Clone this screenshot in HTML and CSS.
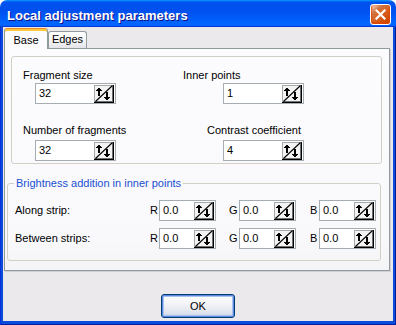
FILE: index.html
```html
<!DOCTYPE html>
<html>
<head>
<meta charset="utf-8">
<title>Local adjustment parameters</title>
<link rel="stylesheet" href="styles.css">
</head>
<body>
<div class="window">
  <div class="titlebar">
    <span class="title">Local adjustment parameters</span>
    <span class="close"><svg width="11" height="11" viewBox="0 0 11 11"><path d="M1.5 1.5 L9.5 9.5 M9.5 1.5 L1.5 9.5" stroke="#fff" stroke-width="2.2" stroke-linecap="square" fill="none"/></svg></span>
  </div>
  <div class="frame">
    <div class="client">
      <div class="tabs">
        <div class="tab active">Base</div>
        <div class="tab">Edges</div>
      </div>
      <div class="panel">
        <div class="box">
          <div class="field">
            <div class="lbl">Fragment size</div>
            <div class="input wide ind-l"><span class="val">32</span><svg class="spin" width="20" height="18" viewBox="0 0 20 18" shape-rendering="crispEdges"><rect width="20" height="18" fill="#f3f3f3"/><rect width="20" height="1" fill="#a8a8a8"/><rect width="1" height="18" fill="#a8a8a8"/><rect x="19" width="1" height="18" fill="#000"/><rect y="17" width="20" height="1" fill="#000"/><rect x="18" y="1" width="1" height="16" fill="#707070"/><rect x="1" y="16" width="18" height="1" fill="#707070"/><path d="M1.5 16.5 L18.5 0.5" stroke="#000" stroke-width="1.1" shape-rendering="auto"/><path d="M4 3H6V4H7V5H8V6H6V11H4V6H2V5H3V4H4Z" fill="#000"/><path d="M12 7H14V12H16V13H15V14H14V15H12V14H11V13H10V12H12Z" fill="#000"/></svg></div>
          </div>
          <div class="field">
            <div class="lbl">Inner points</div>
            <div class="input wide ind-r"><span class="val">1</span><svg class="spin" width="20" height="18" viewBox="0 0 20 18" shape-rendering="crispEdges"><rect width="20" height="18" fill="#f3f3f3"/><rect width="20" height="1" fill="#a8a8a8"/><rect width="1" height="18" fill="#a8a8a8"/><rect x="19" width="1" height="18" fill="#000"/><rect y="17" width="20" height="1" fill="#000"/><rect x="18" y="1" width="1" height="16" fill="#707070"/><rect x="1" y="16" width="18" height="1" fill="#707070"/><path d="M1.5 16.5 L18.5 0.5" stroke="#000" stroke-width="1.1" shape-rendering="auto"/><path d="M4 3H6V4H7V5H8V6H6V11H4V6H2V5H3V4H4Z" fill="#000"/><path d="M12 7H14V12H16V13H15V14H14V15H12V14H11V13H10V12H12Z" fill="#000"/></svg></div>
          </div>
          <div class="field row2">
            <div class="lbl">Number of fragments</div>
            <div class="input wide ind-l gap3"><span class="val">32</span><svg class="spin" width="20" height="18" viewBox="0 0 20 18" shape-rendering="crispEdges"><rect width="20" height="18" fill="#f3f3f3"/><rect width="20" height="1" fill="#a8a8a8"/><rect width="1" height="18" fill="#a8a8a8"/><rect x="19" width="1" height="18" fill="#000"/><rect y="17" width="20" height="1" fill="#000"/><rect x="18" y="1" width="1" height="16" fill="#707070"/><rect x="1" y="16" width="18" height="1" fill="#707070"/><path d="M1.5 16.5 L18.5 0.5" stroke="#000" stroke-width="1.1" shape-rendering="auto"/><path d="M4 3H6V4H7V5H8V6H6V11H4V6H2V5H3V4H4Z" fill="#000"/><path d="M12 7H14V12H16V13H15V14H14V15H12V14H11V13H10V12H12Z" fill="#000"/></svg></div>
          </div>
          <div class="field row2">
            <div class="lbl ind-c">Contrast coefficient</div>
            <div class="input wide ind-r gap3"><span class="val">4</span><svg class="spin" width="20" height="18" viewBox="0 0 20 18" shape-rendering="crispEdges"><rect width="20" height="18" fill="#f3f3f3"/><rect width="20" height="1" fill="#a8a8a8"/><rect width="1" height="18" fill="#a8a8a8"/><rect x="19" width="1" height="18" fill="#000"/><rect y="17" width="20" height="1" fill="#000"/><rect x="18" y="1" width="1" height="16" fill="#707070"/><rect x="1" y="16" width="18" height="1" fill="#707070"/><path d="M1.5 16.5 L18.5 0.5" stroke="#000" stroke-width="1.1" shape-rendering="auto"/><path d="M4 3H6V4H7V5H8V6H6V11H4V6H2V5H3V4H4Z" fill="#000"/><path d="M12 7H14V12H16V13H15V14H14V15H12V14H11V13H10V12H12Z" fill="#000"/></svg></div>
          </div>
        </div>
        <fieldset class="group">
          <legend>Brightness addition in inner points</legend>
          <div class="crow first">
            <div class="clbl">Along strip:</div>
            <div class="ch"><span class="cl">R</span><div class="input small"><span class="val">0.0</span><svg class="spin" width="20" height="18" viewBox="0 0 20 18" shape-rendering="crispEdges"><rect width="20" height="18" fill="#f3f3f3"/><rect width="20" height="1" fill="#a8a8a8"/><rect width="1" height="18" fill="#a8a8a8"/><rect x="19" width="1" height="18" fill="#000"/><rect y="17" width="20" height="1" fill="#000"/><rect x="18" y="1" width="1" height="16" fill="#707070"/><rect x="1" y="16" width="18" height="1" fill="#707070"/><path d="M1.5 16.5 L18.5 0.5" stroke="#000" stroke-width="1.1" shape-rendering="auto"/><path d="M4 3H6V4H7V5H8V6H6V11H4V6H2V5H3V4H4Z" fill="#000"/><path d="M12 7H14V12H16V13H15V14H14V15H12V14H11V13H10V12H12Z" fill="#000"/></svg></div></div>
            <div class="ch g"><span class="cl wg">G</span><div class="input small"><span class="val">0.0</span><svg class="spin" width="20" height="18" viewBox="0 0 20 18" shape-rendering="crispEdges"><rect width="20" height="18" fill="#f3f3f3"/><rect width="20" height="1" fill="#a8a8a8"/><rect width="1" height="18" fill="#a8a8a8"/><rect x="19" width="1" height="18" fill="#000"/><rect y="17" width="20" height="1" fill="#000"/><rect x="18" y="1" width="1" height="16" fill="#707070"/><rect x="1" y="16" width="18" height="1" fill="#707070"/><path d="M1.5 16.5 L18.5 0.5" stroke="#000" stroke-width="1.1" shape-rendering="auto"/><path d="M4 3H6V4H7V5H8V6H6V11H4V6H2V5H3V4H4Z" fill="#000"/><path d="M12 7H14V12H16V13H15V14H14V15H12V14H11V13H10V12H12Z" fill="#000"/></svg></div></div>
            <div class="ch b"><span class="cl">B</span><div class="input small"><span class="val">0.0</span><svg class="spin" width="20" height="18" viewBox="0 0 20 18" shape-rendering="crispEdges"><rect width="20" height="18" fill="#f3f3f3"/><rect width="20" height="1" fill="#a8a8a8"/><rect width="1" height="18" fill="#a8a8a8"/><rect x="19" width="1" height="18" fill="#000"/><rect y="17" width="20" height="1" fill="#000"/><rect x="18" y="1" width="1" height="16" fill="#707070"/><rect x="1" y="16" width="18" height="1" fill="#707070"/><path d="M1.5 16.5 L18.5 0.5" stroke="#000" stroke-width="1.1" shape-rendering="auto"/><path d="M4 3H6V4H7V5H8V6H6V11H4V6H2V5H3V4H4Z" fill="#000"/><path d="M12 7H14V12H16V13H15V14H14V15H12V14H11V13H10V12H12Z" fill="#000"/></svg></div></div>
          </div>
          <div class="crow">
            <div class="clbl">Between strips:</div>
            <div class="ch"><span class="cl">R</span><div class="input small"><span class="val">0.0</span><svg class="spin" width="20" height="18" viewBox="0 0 20 18" shape-rendering="crispEdges"><rect width="20" height="18" fill="#f3f3f3"/><rect width="20" height="1" fill="#a8a8a8"/><rect width="1" height="18" fill="#a8a8a8"/><rect x="19" width="1" height="18" fill="#000"/><rect y="17" width="20" height="1" fill="#000"/><rect x="18" y="1" width="1" height="16" fill="#707070"/><rect x="1" y="16" width="18" height="1" fill="#707070"/><path d="M1.5 16.5 L18.5 0.5" stroke="#000" stroke-width="1.1" shape-rendering="auto"/><path d="M4 3H6V4H7V5H8V6H6V11H4V6H2V5H3V4H4Z" fill="#000"/><path d="M12 7H14V12H16V13H15V14H14V15H12V14H11V13H10V12H12Z" fill="#000"/></svg></div></div>
            <div class="ch g"><span class="cl wg">G</span><div class="input small"><span class="val">0.0</span><svg class="spin" width="20" height="18" viewBox="0 0 20 18" shape-rendering="crispEdges"><rect width="20" height="18" fill="#f3f3f3"/><rect width="20" height="1" fill="#a8a8a8"/><rect width="1" height="18" fill="#a8a8a8"/><rect x="19" width="1" height="18" fill="#000"/><rect y="17" width="20" height="1" fill="#000"/><rect x="18" y="1" width="1" height="16" fill="#707070"/><rect x="1" y="16" width="18" height="1" fill="#707070"/><path d="M1.5 16.5 L18.5 0.5" stroke="#000" stroke-width="1.1" shape-rendering="auto"/><path d="M4 3H6V4H7V5H8V6H6V11H4V6H2V5H3V4H4Z" fill="#000"/><path d="M12 7H14V12H16V13H15V14H14V15H12V14H11V13H10V12H12Z" fill="#000"/></svg></div></div>
            <div class="ch b"><span class="cl">B</span><div class="input small"><span class="val">0.0</span><svg class="spin" width="20" height="18" viewBox="0 0 20 18" shape-rendering="crispEdges"><rect width="20" height="18" fill="#f3f3f3"/><rect width="20" height="1" fill="#a8a8a8"/><rect width="1" height="18" fill="#a8a8a8"/><rect x="19" width="1" height="18" fill="#000"/><rect y="17" width="20" height="1" fill="#000"/><rect x="18" y="1" width="1" height="16" fill="#707070"/><rect x="1" y="16" width="18" height="1" fill="#707070"/><path d="M1.5 16.5 L18.5 0.5" stroke="#000" stroke-width="1.1" shape-rendering="auto"/><path d="M4 3H6V4H7V5H8V6H6V11H4V6H2V5H3V4H4Z" fill="#000"/><path d="M12 7H14V12H16V13H15V14H14V15H12V14H11V13H10V12H12Z" fill="#000"/></svg></div></div>
          </div>
        </fieldset>
      </div>
      <div class="footer">
        <button class="ok" type="button">OK</button>
      </div>
    </div>
  </div>
</div>
</body>
</html>
```

FILE: styles.css
```css
* { box-sizing: border-box; }
html, body { margin: 0; padding: 0; background: #ffffff; }
body {
  font-family: "Liberation Sans", Arial, sans-serif;
  font-size: 11px;
  line-height: 13px;
  color: #000;
}
.window {
  width: 396px;
  height: 325px;
  display: flex;
  flex-direction: column;
}
.titlebar {
  flex: none;
  height: 27px;
  display: flex;
  padding: 4px 5px 0 7px;
  border-radius: 7px 7px 0 0;
  background: linear-gradient(180deg, #0997ff, #0053ee 8%, #0050ee 40%, #0066ff 88%, #0066ff 93%, #005bff 95%, #003dd7 96%, #003dd7);
}
.title {
  flex: 1;
  align-self: center;
  font-weight: bold;
  font-size: 13px;
  line-height: 16px;
  color: #fff;
  text-shadow: 1px 1px #0f1089;
  white-space: nowrap;
}
.close {
  flex: none;
  width: 21px;
  height: 21px;
  border: 1px solid #fff;
  border-radius: 3px;
  display: flex;
  align-items: center;
  justify-content: center;
  background: radial-gradient(circle at 90% 90%, #cc4600 0, #dc6527 55%, #cd7546 70%, #ffccb2 90%, #fff 100%);
  box-shadow: inset 0 -1px 2px 1px #da4600;
}
.frame {
  flex: 1;
  display: flex;
  padding: 0 3px 4px 3px;
  background: #0b4bdc;
  box-shadow: inset 1px 0 #0831d9, inset -1px 0 #001ea0, inset 0 -1px #001ea0;
}
.client {
  flex: 1;
  display: flex;
  flex-direction: column;
  background: #ece9ec;
}
.tabs {
  position: relative;
  z-index: 1;
  display: flex;
  align-items: flex-end;
  height: 21px;
  margin: 1px 0 -1px 1px;
}
.tab {
  height: 17px;
  margin-bottom: 1px;
  width: 39px;
  border: 1px solid #919b9c;
  border-bottom: none;
  border-radius: 3px 3px 0 0;
  background: linear-gradient(180deg, #ffffff, #f3f3f5 60%, #e3e3e8);
  text-align: center;
  line-height: 15px;
}
.tab.active {
  height: 21px;
  margin-bottom: 0;
  width: 44px;
  border-top: 1px solid #e68b2c;
  box-shadow: inset 0 2px #ffc73c;
  background: #fcfcfe;
  line-height: 20px;
  padding-top: 1px;
}
.panel {
  height: 223px;
  width: 386px;
  margin-left: 1px;
  border: 1px solid #919b9c;
  background: linear-gradient(180deg, #fcfcfe, #f9f9fc 85%, #f4f4f6);
  box-shadow: 1px 1px 0 #d0d0d8;
}
.box {
  margin: 7px 0 0 6px;
  width: 371px;
  height: 108px;
  border: 1px solid #d0d0c8;
  border-radius: 3px;
  padding: 12px 0 0 11px;
  display: grid;
  grid-template-columns: 160px 1fr;
}
.field { display: flex; flex-direction: column; align-items: flex-start; }
.field.row2 { margin-top: 17px; }
.lbl { height: 13px; white-space: nowrap; }
.lbl.ind-c { margin-left: 24px; }
.input {
  height: 21px;
  background: #fff;
  border: 1px solid #a5acb2;
  display: flex;
  padding-left: 3px;
}
.input.wide { width: 81px; margin-top: 1px; }
.input.wide.gap3 { margin-top: 3px; }
.input.ind-l { margin-left: 12px; }
.input.ind-r { margin-left: 40px; }
.input.small { width: 57px; }
.val { flex: 1; line-height: 19px; }
.spin { flex: none; margin: 1px 1px 0 0; display: block; }
.group {
  margin: 13px 0 0 2px;
  width: 374px;
  border: 1px solid #d0d0c8;
  border-radius: 3px;
  padding: 0 0 11px 0;
  min-width: 0;
}
.group legend {
  margin-left: 6px;
  padding: 0 2px;
  color: #1a4fd0;
  line-height: 13px;
}
.crow {
  display: flex;
  align-items: center;
  height: 21px;
  padding-left: 7px;
  margin-top: 7px;
}
.crow.first { margin-top: 10px; }
.clbl { width: 135px; white-space: nowrap; }
.ch { display: flex; align-items: center; }
.ch.g { margin-left: 13px; }
.ch.b { margin-left: 14px; }
.cl { width: 9px; }
.cl.wg { width: 10px; }
.footer {
  display: flex;
  justify-content: center;
  margin-top: 23px;
}
.ok {
  width: 74px;
  height: 24px;
  margin: 0;
  padding: 0;
  font-family: "Liberation Sans", Arial, sans-serif;
  font-size: 11px;
  color: #000;
  border: 1px solid #003c74;
  border-radius: 3px;
  background: linear-gradient(180deg, #ffffff, #f1f2f6 45%, #dfe4ee 80%, #c6cfe2);
  box-shadow: inset 0 0 0 1px #5b88e0, inset 0 0 0 2px #a9c2f0;
}
```
